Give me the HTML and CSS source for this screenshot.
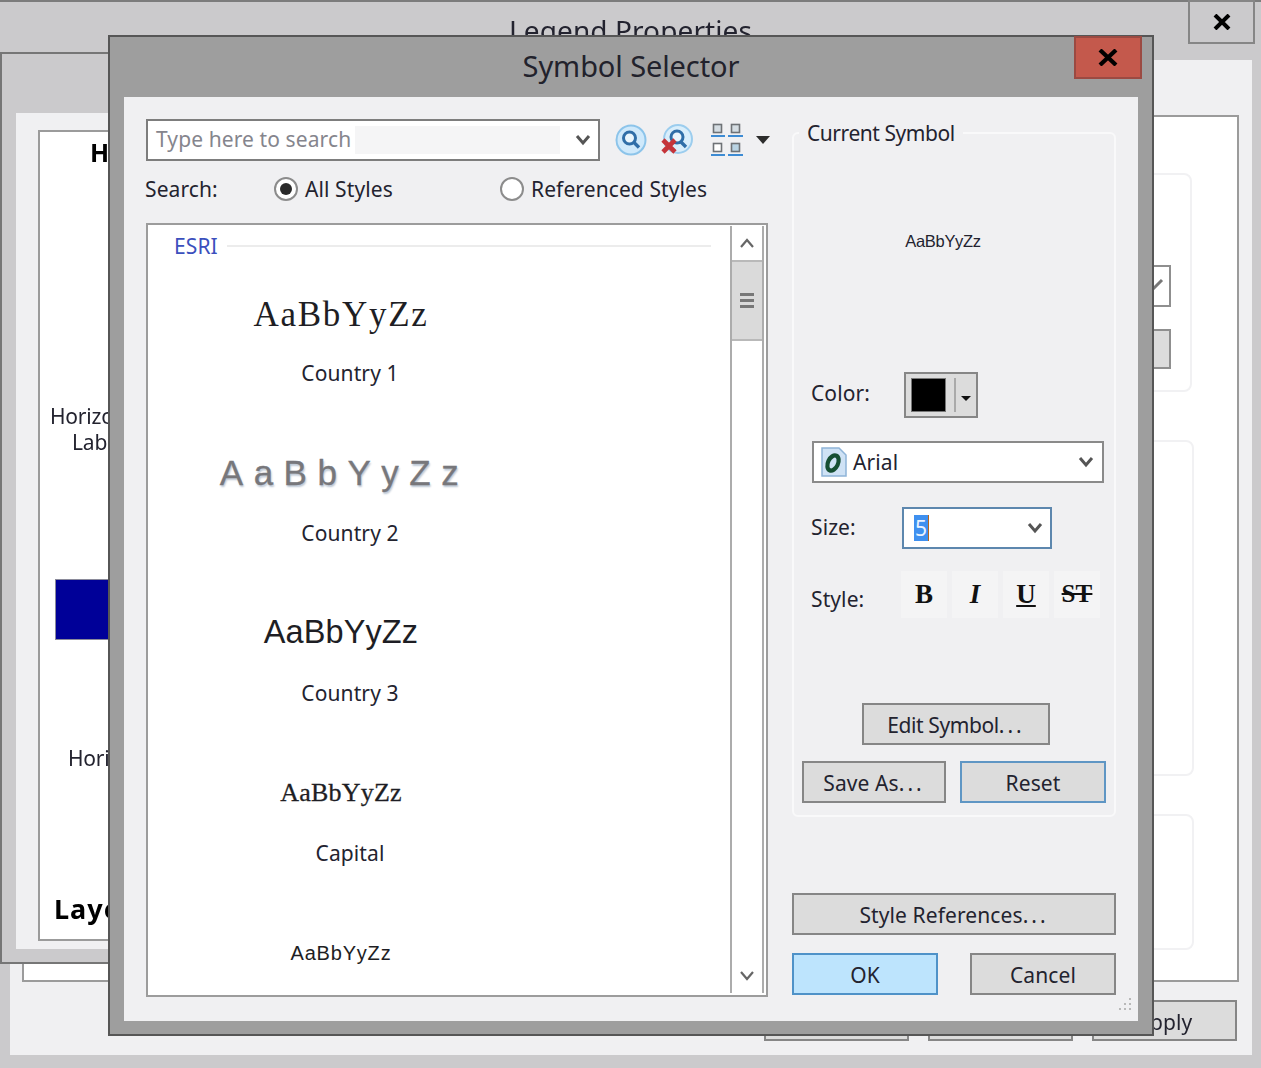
FILE: index.html
```html
<!DOCTYPE html>
<html lang="en">
<head>
<meta charset="UTF-8" />
<title>Symbol Selector</title>
<link rel="stylesheet" href="styles.css">
</head>
<body>

<!-- Legend Properties, the window at the back -->
<div class="backWindow">
  <div class="backTitle">Legend Properties</div>
  <div class="backClient">
    <div class="backPanel">
      <div class="backGroup backGroupOne">
        <div class="backCheck"><svg width="16" height="16" viewBox="0 0 16 16"><path d="M1 14 L13 2" fill="none" stroke="#777" stroke-width="3"/></svg></div>
        <div class="backSmallBtn"></div>
      </div>
      <div class="backGroup backGroupTwo"></div>
      <div class="backGroup backGroupThree"></div>
    </div>
    <div class="backButtons">
      <button class="winBtn backBtn">OK</button>
      <button class="winBtn backBtn">Cancel</button>
      <button class="winBtn backBtn">Apply</button>
    </div>
  </div>
  <div class="backClose">
    <svg width="18" height="16" viewBox="0 0 18 16"><path d="M2 1 L16 15 M16 1 L2 15" stroke="#000" stroke-width="4" fill="none"/></svg>
  </div>
</div>

<!-- Middle window, mostly hidden by the selector -->
<div class="midWindow">
  <div class="midClient">
    <div class="midPanel">
      <div class="midHead">HI</div>
      <div class="midLabel">Horizontal</div>
      <div class="midLabel midIndent">Labels</div>
      <div class="midSwatch"></div>
      <div class="midLabel midLabelTwo">Horizontal</div>
      <div class="midBold">Layout</div>
    </div>
  </div>
</div>

<!-- Symbol Selector dialog -->
<div class="dialog">
  <div class="dialogTitle">Symbol Selector</div>
  <div class="dialogClose">
    <svg width="20" height="17" viewBox="0 0 20 17"><path d="M2 1 L18 16 M18 1 L2 16" stroke="#000" stroke-width="4.2" fill="none"/></svg>
  </div>

  <div class="client">
    <div class="leftCol">
      <div class="searchRow">
        <div class="combo searchCombo">
          <span class="searchText">Type here to search</span>
          <span class="searchFill"></span>
          <svg class="chevron" width="16" height="12" viewBox="0 0 16 12"><path d="M2 2 L8 9 L14 2" fill="none" stroke="#555" stroke-width="3"/></svg>
        </div>
        <svg class="toolIcon iconFind" width="32" height="32" viewBox="0 0 32 32">
          <circle cx="16" cy="16" r="14.5" fill="#cfe9fb" stroke="#8cc4ea" stroke-width="2"/>
          <circle cx="14.5" cy="14" r="6" fill="#eaf6fd" stroke="#2f6ea8" stroke-width="3"/>
          <path d="M19 18.5 L24 23.5" stroke="#2f6ea8" stroke-width="3.4"/>
        </svg>
        <svg class="toolIcon iconClear" width="32" height="32" viewBox="0 0 32 32">
          <circle cx="17" cy="15" r="14" fill="#d9eefb" stroke="#9ccdee" stroke-width="2"/>
          <circle cx="16" cy="13" r="6" fill="#eaf6fd" stroke="#2f6ea8" stroke-width="3"/>
          <path d="M20 18 L25 23" stroke="#2f6ea8" stroke-width="3.4"/>
          <path d="M2 16 L14 28 M14 16 L2 28" stroke="#c5343a" stroke-width="4.6"/>
        </svg>
        <svg class="toolIcon iconGrid" width="34" height="34" viewBox="0 0 34 34">
          <rect x="3.5" y="1.5" width="8" height="8" fill="#d5dde3" stroke="#6e7276" stroke-width="1.6"/>
          <rect x="21.5" y="1.5" width="8" height="8" fill="#d5dde3" stroke="#6e7276" stroke-width="1.6"/>
          <rect x="3.5" y="20.5" width="8" height="8" fill="#fff" stroke="#6e7276" stroke-width="1.6"/>
          <rect x="21.5" y="20.5" width="8" height="8" fill="#b9d3e3" stroke="#6e7276" stroke-width="1.6"/>
          <path d="M1 13 H15 M18 13 H33 M1 32 H15 M18 32 H33" stroke="#3d8bd3" stroke-width="2"/>
        </svg>
        <span class="caret"></span>
      </div>

      <div class="optionRow">
        <span class="searchLabel">Search:</span>
        <label class="radio radioAll"><span class="radioDot checked"></span>All Styles</label>
        <label class="radio radioRef"><span class="radioDot"></span>Referenced Styles</label>
      </div>

      <div class="symbolList">
        <div class="listBody">
          <div class="listHead"><span class="listHeadName">ESRI</span><span class="listHeadLine"></span></div>
          <div class="symbolItem"><div class="sample sampleOne">AaBbYyZz</div><div class="symbolName">Country 1</div></div>
          <div class="symbolItem"><div class="sample sampleTwo">AaBbYyZz</div><div class="symbolName">Country 2</div></div>
          <div class="symbolItem"><div class="sample sampleThree">AaBbYyZz</div><div class="symbolName">Country 3</div></div>
          <div class="symbolItem"><div class="sample sampleFour">AaBbYyZz</div><div class="symbolName">Capital</div></div>
          <div class="symbolItem"><div class="sample sampleFive">AaBbYyZz</div></div>
        </div>
        <div class="scrollBar">
          <div class="scrollBtn"><svg width="16" height="10" viewBox="0 0 16 10"><path d="M2 9 L8 2 L14 9" fill="none" stroke="#666" stroke-width="2.2"/></svg></div>
          <div class="scrollThumb"><span class="grip"></span></div>
          <div class="scrollTrack"></div>
          <div class="scrollBtn"><svg width="16" height="10" viewBox="0 0 16 10"><path d="M2 1 L8 8 L14 1" fill="none" stroke="#666" stroke-width="2.2"/></svg></div>
        </div>
      </div>
    </div>

    <div class="rightCol">
      <fieldset class="currentBox">
        <legend class="currentLegend">Current Symbol</legend>
        <div class="preview">AaBbYyZz</div>

        <div class="fieldRow colorRow">
          <span class="fieldLabel colorLabel">Color:</span>
          <div class="colorBtn">
            <span class="colorSwatch"></span>
            <span class="colorSep"></span>
            <span class="colorCaret"></span>
          </div>
        </div>

        <div class="combo fontCombo">
          <svg class="fontIcon" width="28" height="30" viewBox="0 0 28 30">
            <path d="M2 1 H19 L26 8 V29 H2 Z" fill="#cfe2f5" stroke="#8fb4d8" stroke-width="1.5"/>
            <ellipse cx="13" cy="16" rx="5" ry="8" transform="rotate(25 13 16)" fill="none" stroke="#164f33" stroke-width="4.2"/>
          </svg>
          <span class="comboText">Arial</span>
          <svg class="chevron" width="16" height="12" viewBox="0 0 16 12"><path d="M2 2 L8 9 L14 2" fill="none" stroke="#555" stroke-width="3"/></svg>
        </div>

        <div class="fieldRow sizeRow">
          <span class="fieldLabel sizeLabel">Size:</span>
          <div class="combo sizeCombo">
            <span class="sizeValue">5</span>
            <svg class="chevron" width="16" height="12" viewBox="0 0 16 12"><path d="M2 2 L8 9 L14 2" fill="none" stroke="#555" stroke-width="3"/></svg>
          </div>
        </div>

        <div class="fieldRow styleRow">
          <span class="fieldLabel styleLabel">Style:</span>
          <div class="styleBtns">
            <span class="styleBtn styleB">B</span>
            <span class="styleBtn styleI">I</span>
            <span class="styleBtn styleU">U</span>
            <span class="styleBtn styleS">ST</span>
          </div>
        </div>

        <button class="winBtn editBtn">Edit Symbol<span class="dots">...</span></button>
        <div class="saveRow">
          <button class="winBtn saveBtn">Save As<span class="dots">...</span></button>
          <button class="winBtn saveBtn focusBtn">Reset</button>
        </div>
      </fieldset>

      <button class="winBtn refBtn">Style References<span class="dots">...</span></button>
      <div class="okRow">
        <button class="winBtn okBtn">OK</button>
        <button class="winBtn okBtn cancelBtn">Cancel</button>
      </div>
    </div>

    <svg class="resizeGrip" width="18" height="16" viewBox="0 0 18 16">
      <path d="M15 1 v2 M10 6 v2 M15 6 v2 M5 11 v2 M10 11 v2 M15 11 v2" stroke="#b9b9b9" stroke-width="2"/>
    </svg>
  </div>
</div>

</body>
</html>
```

FILE: styles.css
```css
body {
  margin: 0;
  background: #cbcacc;
  color: #23232f;
  font-family: "Noto Sans", Tahoma, sans-serif;
  font-size: 21px;
  letter-spacing: 0.1px;
  overflow: hidden;
  filter: blur(0.45px);
}
button {
  font-family: inherit;
}

/* Shared button look */
.winBtn {
  box-sizing: border-box;
  display: block;
  height: 42px;
  padding: 2px 0 0 0;
  background: #dcdcdc;
  border: 2px solid #868686;
  color: #23232f;
  font-size: 21px;
  letter-spacing: 0.1px;
}
.dots {
  letter-spacing: 3px;
}

/* Back window */
.backWindow {
  position: relative;
  box-sizing: border-box;
  width: 1261px;
  height: 1068px;
  border-top: 2px solid #7c7c7c;
  display: flex;
  flex-direction: column;
}
.backTitle {
  height: 58px;
  padding-top: 10px;
  box-sizing: border-box;
  text-align: center;
  font-size: 28px;
  line-height: 36px;
}
.backClient {
  box-sizing: border-box;
  width: 1242px;
  height: 995px;
  margin-left: 10px;
  padding: 55px 13px 0 12px;
  background: #f0f0f2;
}
.backPanel {
  box-sizing: border-box;
  height: 867px;
  background: white;
  border: 2px solid #9b9b9b;
  padding-right: 45px;
  display: flex;
  flex-direction: column;
  align-items: flex-end;
}
.backGroup {
  box-sizing: border-box;
  width: 300px;
  border: 2px solid #f1f1f3;
  border-radius: 8px;
}
.backGroupOne {
  height: 219px;
  margin-top: 56px;
  padding: 90px 19px 0 0;
  display: flex;
  flex-direction: column;
  align-items: flex-end;
}
.backGroupTwo {
  height: 336px;
  margin-top: 48px;
  margin-right: -2px;
}
.backGroupThree {
  height: 136px;
  margin-top: 38px;
  margin-right: -2px;
}
.backCheck {
  box-sizing: border-box;
  width: 60px;
  height: 42px;
  border: 2px solid #8f8f8f;
  display: flex;
  align-items: center;
  justify-content: flex-end;
  padding-right: 4px;
}
.backSmallBtn {
  box-sizing: border-box;
  width: 60px;
  height: 40px;
  margin-top: 22px;
  background: #dcdcdc;
  border: 2px solid #8f8f8f;
}
.backButtons {
  display: flex;
  justify-content: flex-end;
  gap: 19px;
  margin-top: 18px;
  padding-right: 2px;
}
.backBtn {
  width: 145px;
  height: 41px;
}
.backClose {
  position: absolute;
  top: -2px;
  right: 6px;
  box-sizing: border-box;
  width: 67px;
  height: 44px;
  border: 2px solid #868686;
  display: flex;
  align-items: center;
  justify-content: center;
}

/* Middle window */
.midWindow {
  position: absolute;
  top: 52px;
  left: 0;
  box-sizing: border-box;
  width: 700px;
  height: 912px;
  padding: 59px 0 0 14px;
  background: #cbcacc;
  border: 2px solid #767676;
}
.midClient {
  box-sizing: border-box;
  height: 836px;
  padding: 17px 0 0 22px;
  background: #f0f0f2;
}
.midPanel {
  box-sizing: border-box;
  height: 811px;
  padding-top: 2px;
  background: white;
  border: 2px solid #9b9b9b;
  overflow: hidden;
}
.midHead {
  margin: 0 0 0 50px;
  font-size: 25px;
  line-height: 36px;
  font-weight: bold;
  color: #000;
}
.midLabel {
  margin: 233px 0 0 10px;
  line-height: 26px;
  letter-spacing: -0.2px;
}
.midLabel.midIndent {
  margin: 0 0 0 32px;
}
.midSwatch {
  box-sizing: border-box;
  width: 300px;
  height: 61px;
  margin: 124px 0 0 15px;
  background: #000098;
  border: 1px solid #8a8a9a;
}
.midLabel.midLabelTwo {
  margin: 105px 0 0 28px;
}
.midBold {
  margin: 120px 0 0 14px;
  font-size: 27px;
  line-height: 36px;
  font-weight: bold;
  color: #000;
  letter-spacing: 1px;
}

/* Symbol Selector dialog */
.dialog {
  position: absolute;
  top: 35px;
  left: 108px;
  box-sizing: border-box;
  width: 1046px;
  height: 1001px;
  background: #9e9e9e;
  border: 2px solid #565656;
  display: flex;
  flex-direction: column;
}
.dialogTitle {
  height: 60px;
  text-align: center;
  font-size: 29px;
  letter-spacing: -0.1px;
  line-height: 57px;
  color: #22222c;
}
.dialogClose {
  position: absolute;
  top: -1px;
  right: 10px;
  box-sizing: border-box;
  width: 68px;
  height: 43px;
  background: #c4594c;
  border: 2px solid #9b4a42;
  display: flex;
  align-items: center;
  justify-content: center;
}
.client {
  position: relative;
  box-sizing: border-box;
  height: 924px;
  margin: 0 14px;
  padding: 22px 22px 0 22px;
  background: #f0f0f2;
  display: flex;
  gap: 24px;
}

/* Left column */
.leftCol {
  width: 622px;
}
.searchRow {
  display: flex;
  align-items: center;
  height: 42px;
}
.combo {
  box-sizing: border-box;
  display: flex;
  align-items: center;
  height: 42px;
  background: white;
  border: 2px solid #7d7d7d;
}
.chevron {
  flex: none;
  margin-left: auto;
}
.searchCombo {
  flex: none;
  width: 454px;
  padding: 0 7px 0 8px;
}
.searchText {
  color: #85858d;
  white-space: nowrap;
  padding-bottom: 3px;
}
.searchFill {
  width: 205px;
  height: 28px;
  margin-left: 4px;
  background: #f5f5f6;
}
.toolIcon {
  flex: none;
}
.iconFind {
  margin-left: 15px;
}
.iconClear {
  margin-left: 14px;
}
.iconGrid {
  margin-left: 17px;
}
.caret {
  width: 0;
  height: 0;
  margin-left: 12px;
  border-left: 7px solid transparent;
  border-right: 7px solid transparent;
  border-top: 8px solid #2c2c2c;
}
.optionRow {
  display: flex;
  align-items: center;
  height: 56px;
  margin-bottom: 6px;
}
.searchLabel {
  width: 129px;
  margin-left: -1px;
}
.radio {
  display: flex;
  align-items: center;
  gap: 7px;
}
.radioAll {
  width: 226px;
}
.radioDot {
  box-sizing: border-box;
  width: 24px;
  height: 24px;
  border: 2px solid #8c8c8c;
  border-radius: 50%;
  background: white;
  display: flex;
  align-items: center;
  justify-content: center;
}
.radioDot.checked::after {
  content: "";
  width: 12px;
  height: 12px;
  border-radius: 50%;
  background: #2a2a2a;
}

/* Symbol list */
.symbolList {
  box-sizing: border-box;
  height: 774px;
  background: white;
  border: 2px solid #9c9c9c;
  display: flex;
  overflow: hidden;
}
.listBody {
  width: 582px;
  overflow: hidden;
}
.listHead {
  display: flex;
  align-items: center;
  height: 42px;
  padding-left: 26px;
}
.listHeadName {
  color: #3b50bd;
  line-height: 42px;
}
.listHeadLine {
  width: 484px;
  height: 2px;
  margin-left: 9px;
  background: #ececec;
}
.symbolItem {
  width: 394px;
  height: 160px;
  text-align: center;
}
.sample {
  box-sizing: border-box;
  height: 92px;
  padding-right: 8px;
  line-height: 92px;
  white-space: nowrap;
}
.symbolName {
  padding-left: 10px;
  line-height: 29px;
}
.sampleOne {
  font-family: "Liberation Serif", serif;
  font-size: 35px;
  letter-spacing: 1.7px;
  line-height: 95px;
  color: #1e1e24;
}
.sampleTwo {
  padding-right: 1px;
  font-family: "Liberation Sans", sans-serif;
  font-size: 35px;
  letter-spacing: 10.5px;
  color: #77777b;
  -webkit-text-stroke: 0.3px #77777b;
  text-shadow: 1px 2px 2px #b9c4d2;
}
.sampleThree {
  font-family: "Liberation Sans", sans-serif;
  font-size: 32.5px;
  line-height: 90px;
  color: #1e1e24;
}
.sampleFour {
  font-family: "Liberation Serif", serif;
  font-size: 26px;
  letter-spacing: 0.2px;
  color: #1e1e24;
  -webkit-text-stroke: 0.3px #1e1e24;
}
.sampleFive {
  font-family: "Liberation Sans", sans-serif;
  font-size: 20px;
  letter-spacing: 0.8px;
  color: #1e1e24;
}
.scrollBar {
  box-sizing: border-box;
  width: 34px;
  margin: 1px 2px 2px 0;
  background: white;
  border-left: 2px solid #acacac;
  border-right: 2px solid #acacac;
  display: flex;
  flex-direction: column;
}
.scrollBtn {
  height: 34px;
  flex: none;
  display: flex;
  align-items: center;
  justify-content: center;
}
.scrollThumb {
  height: 81px;
  flex: none;
  background: #dadada;
  border-top: 2px solid #b9b9b9;
  border-bottom: 2px solid #b9b9b9;
  box-sizing: border-box;
  display: flex;
  align-items: center;
  justify-content: center;
}
.grip {
  width: 14px;
  height: 15px;
  background: repeating-linear-gradient(#777 0 3px, transparent 3px 6px);
}
.scrollTrack {
  flex: 1;
}

/* Right column */
.rightCol {
  width: 324px;
}
.currentBox {
  box-sizing: border-box;
  height: 698px;
  min-width: 0;
  margin: 0;
  padding: 0 8px;
  border: 2px solid #f9f9fa;
  border-radius: 6px;
}
.currentLegend {
  margin-left: -3px;
  padding: 0 8px 0 8px;
  line-height: 28px;
  letter-spacing: -0.45px;
}
.preview {
  box-sizing: border-box;
  height: 225px;
  padding: 0 22px 37px 0;
  display: flex;
  align-items: center;
  justify-content: center;
  font-family: "Liberation Sans", sans-serif;
  font-size: 16.5px;
  letter-spacing: -0.3px;
}
.fieldRow {
  display: flex;
  align-items: center;
}
.fieldLabel {
  width: 91px;
  margin-left: 9px;
}
.colorLabel {
  width: 93px;
  padding-bottom: 4px;
}
.sizeLabel {
  padding-bottom: 3px;
}
.colorRow {
  height: 46px;
}
.colorBtn {
  box-sizing: border-box;
  width: 74px;
  height: 46px;
  padding: 4px 5px;
  background: #dcdcdc;
  border: 2px solid #868686;
  display: flex;
  align-items: center;
}
.colorSwatch {
  width: 37px;
  height: 34px;
  background: black;
  border: 1px solid #777;
  box-sizing: border-box;
}
.colorSep {
  width: 2px;
  height: 34px;
  margin-left: 8px;
  background: #aaa;
}
.colorCaret {
  width: 0;
  height: 0;
  margin: 6px 0 0 5px;
  border-left: 5px solid transparent;
  border-right: 5px solid transparent;
  border-top: 5px solid #111;
}
.fontCombo {
  width: 292px;
  margin: 23px 0 0 10px;
  padding: 0 8px 0 6px;
  border-color: #8a8a8a;
}
.fontIcon {
  flex: none;
}
.comboText {
  margin-left: 5px;
}
.sizeRow {
  margin-top: 24px;
}
.sizeCombo {
  width: 150px;
  padding: 0 7px 0 10px;
  border-color: #5d87ae;
}
.sizeValue {
  color: #eaf3ff;
  background: #3f90ef;
  line-height: 26px;
  padding: 0 1px;
  border-right: 1px solid #b5651d;
}
.styleRow {
  align-items: flex-start;
  margin-top: 22px;
}
.styleLabel {
  padding-top: 14px;
}
.styleBtns {
  display: flex;
  gap: 5px;
  margin-left: -1px;
}
.styleBtn {
  width: 46px;
  height: 47px;
  background: #f4f4f5;
  text-align: center;
  font-family: "Liberation Serif", serif;
  font-weight: bold;
  font-size: 27px;
  line-height: 46px;
  color: #111;
}
.styleI {
  font-style: italic;
}
.styleU {
  text-decoration: underline;
}
.styleS {
  text-decoration: line-through;
  font-size: 25px;
}
.editBtn {
  width: 188px;
  margin: 85px 0 0 60px;
  letter-spacing: -0.4px;
}
.saveRow {
  display: flex;
  gap: 14px;
  margin-top: 16px;
}
.saveBtn {
  width: 144px;
}
.focusBtn {
  width: 146px;
  border-color: #5f96c4;
}
.refBtn {
  width: 324px;
  margin-top: 76px;
}
.okRow {
  display: flex;
  justify-content: space-between;
  margin-top: 18px;
}
.okBtn {
  width: 146px;
  background: #bde4fd;
  border-color: #4f92c8;
}
.cancelBtn {
  background: #dcdcdc;
  border-color: #868686;
}
.resizeGrip {
  position: absolute;
  right: 5px;
  bottom: 8px;
}
```
